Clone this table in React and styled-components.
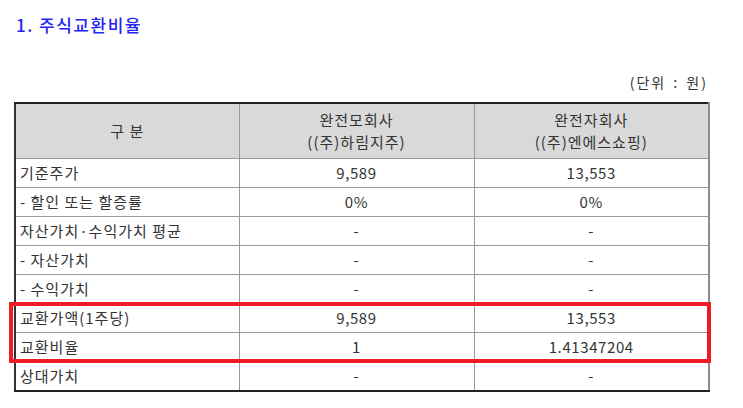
import React from "react";
import styled, { createGlobalStyle } from "styled-components";

const GlobalStyle = createGlobalStyle`
  html, body {
    margin: 0;
    padding: 0;
    background: #ffffff;
  }
  body {
    font-family: "Noto Sans CJK KR", "Liberation Sans", sans-serif;
    color: #333333;
  }
`;

const rows = [
  { label: "기준주가", parent: "9,589", child: "13,553" },
  { label: "- 할인 또는 할증률", parent: "0%", child: "0%" },
  { label: "자산가치·수익가치 평균", parent: "-", child: "-" },
  { label: "- 자산가치", parent: "-", child: "-" },
  { label: "- 수익가치", parent: "-", child: "-" },
  { label: "교환가액(1주당)", parent: "9,589", child: "13,553" },
  { label: "교환비율", parent: "1", child: "1.41347204", soft: true },
  { label: "상대가치", parent: "-", child: "-" },
];

const Page = styled.div`
  width: 743px;
  height: 408px;
  padding: 12px 35px 0 14px;
  box-sizing: border-box;
`;

const Title = styled.h2`
  margin: 0;
  padding-left: 2px;
  font-size: 17px;
  font-weight: 500;
  line-height: 26px;
  letter-spacing: 1.5px;
  color: #2424f4;
`;

const Unit = styled.div`
  margin-top: 33px;
  text-align: right;
  font-size: 14px;
  line-height: 22px;
  letter-spacing: 2px;
  word-spacing: 2px;
  color: #333333;
`;

const TableWrap = styled.div`
  position: relative;
  margin-top: 9px;
  width: 694px;
`;

const Table = styled.table`
  width: 100%;
  border-collapse: collapse;
  table-layout: fixed;
  border-top: 2px solid #222222;
  border-left: 2px solid #333333;
  border-bottom: 2px solid #222222;
  border-right: 2px solid #8c8c8c;
  font-size: 15px;
  letter-spacing: 1px;
`;

const Head = styled.th`
  height: 54px;
  padding: 0;
  background: #d9d9d9;
  font-weight: normal;
  line-height: 22px;
  text-align: center;
  border: 1px solid #999999;
  border-top: none;
`;

const Row = styled.tr`
  height: 29px;
`;

const Cell = styled.td`
  padding: 0 ${(p) => (p.$label ? "4px" : "0")};
  text-align: ${(p) => (p.$label ? "left" : "center")};
  line-height: 20px;
  white-space: nowrap;
  letter-spacing: ${(p) => (p.$label ? "1px" : "0.6px")};
  border: 1px solid #999999;
  border-top-color: ${(p) => (p.$soft ? "#c4c4c4" : "#999999")};
`;

const Highlight = styled.div`
  position: absolute;
  left: -5px;
  top: 200px;
  width: 702px;
  height: 61px;
  box-sizing: border-box;
  border: 4px solid #ee1c25;
  pointer-events: none;
`;

export default function App() {
  return (
    <>
      <GlobalStyle />
      <Page>
        <Title>1. 주식교환비율</Title>
        <Unit>(단위 : 원)</Unit>
        <TableWrap>
          <Table>
            <colgroup>
              <col style={{ width: "224px" }} />
              <col style={{ width: "235px" }} />
              <col style={{ width: "235px" }} />
            </colgroup>
            <thead>
              <tr>
                <Head>구 분</Head>
                <Head>
                  완전모회사
                  <br />
                  ((주)하림지주)
                </Head>
                <Head>
                  완전자회사
                  <br />
                  ((주)엔에스쇼핑)
                </Head>
              </tr>
            </thead>
            <tbody>
              {rows.map((r) => (
                <Row key={r.label}>
                  <Cell $label $soft={r.soft}>{r.label}</Cell>
                  <Cell $soft={r.soft}>{r.parent}</Cell>
                  <Cell $soft={r.soft}>{r.child}</Cell>
                </Row>
              ))}
            </tbody>
          </Table>
          <Highlight />
        </TableWrap>
      </Page>
    </>
  );
}
